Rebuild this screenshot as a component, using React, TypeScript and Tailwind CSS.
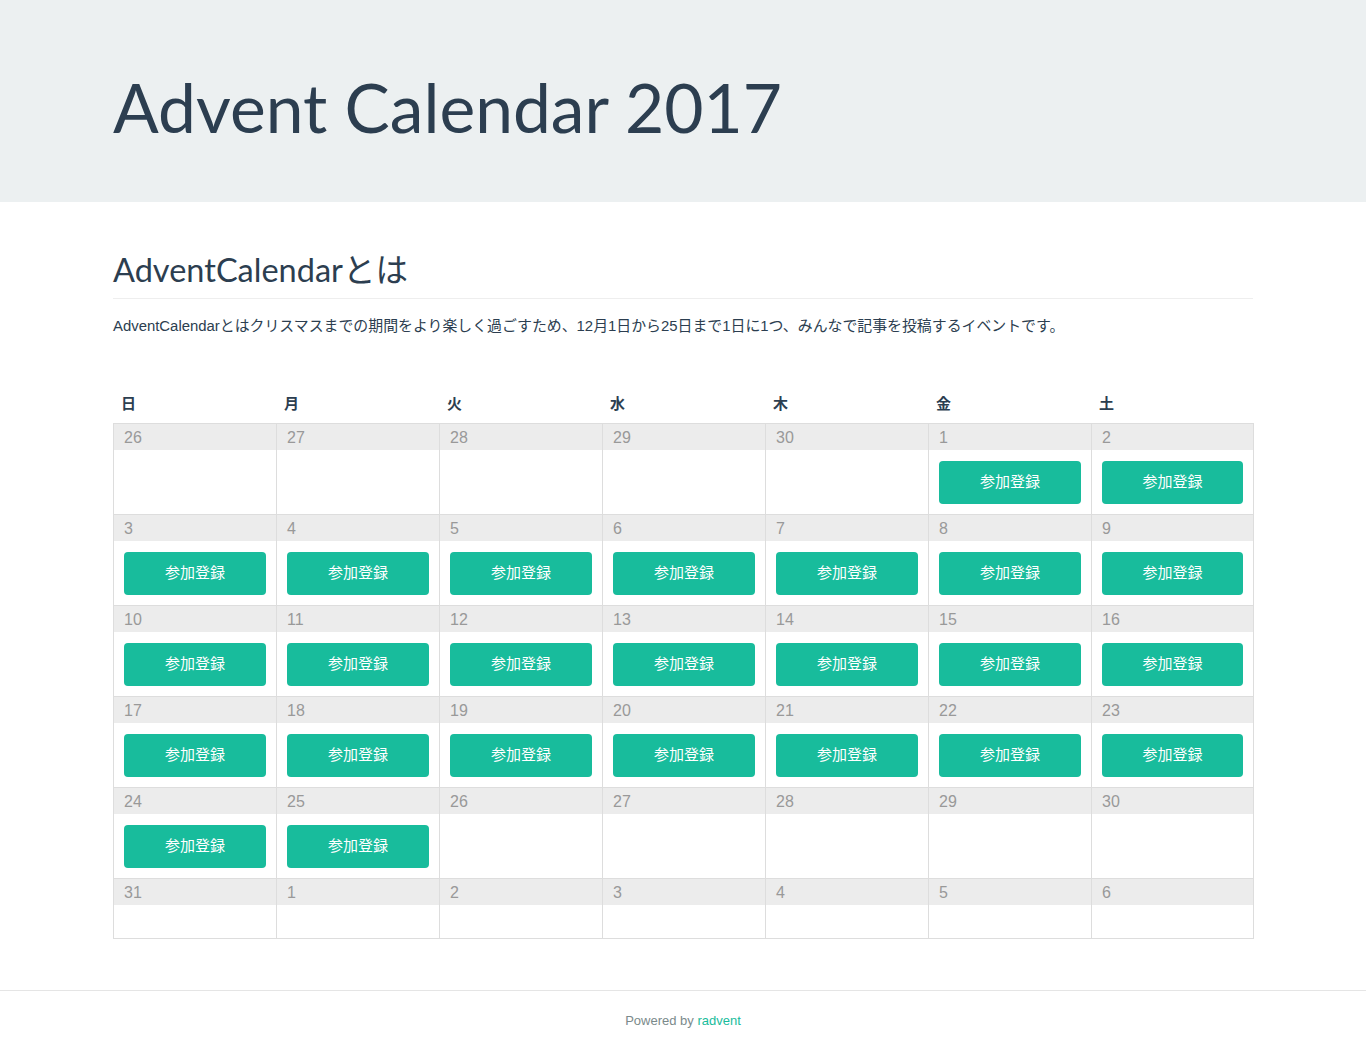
import React from "react";

const jp = "font-['Liberation_Sans','Noto_Sans_CJK_JP',sans-serif]";

type Cell = { day: number; join: boolean };

const rows: Cell[][] = [
  [26, 27, 28, 29, 30].map((d) => ({ day: d, join: false })).concat([
    { day: 1, join: true },
    { day: 2, join: true },
  ]),
  [3, 4, 5, 6, 7, 8, 9].map((d) => ({ day: d, join: true })),
  [10, 11, 12, 13, 14, 15, 16].map((d) => ({ day: d, join: true })),
  [17, 18, 19, 20, 21, 22, 23].map((d) => ({ day: d, join: true })),
  [24, 25].map((d) => ({ day: d, join: true })).concat(
    [26, 27, 28, 29, 30].map((d) => ({ day: d, join: false }))
  ),
  [31, 1, 2, 3, 4, 5, 6].map((d) => ({ day: d, join: false })),
];

const weekdays = ["日", "月", "火", "水", "木", "金", "土"];

function DayCell({ cell, last }: { cell: Cell; last: boolean }) {
  return (
    <div className="border-l border-[#dddddd] last:border-r">
      <div className="h-[26px] bg-[#ececec] px-[10px] pt-[5px] text-[16px] leading-[18px] text-[#999999]">
        {cell.day}
      </div>
      <div className={last ? "h-[33px]" : "h-[64px] px-[10px] pt-[11px]"}>
        {cell.join && !last && (
          <button className="flex h-[43px] w-full items-center justify-center rounded-[4px] bg-[#18bc9c] text-[15px] text-white">
            参加登録
          </button>
        )}
      </div>
    </div>
  );
}

export default function App() {
  return (
    <div className={`min-h-[1060px] bg-white text-[#2c3e50] ${jp}`}>
      <header className="h-[202px] bg-[#ecf0f1]">
        <div className="mx-auto w-[1140px] pt-[63px]">
          <h1 className="font-['Lato',sans-serif] text-[67.7px] leading-[88px]">
            Advent Calendar 2017
          </h1>
        </div>
      </header>

      <main className="mx-auto w-[1140px]">
        <h2 className="mt-[45px] font-['Lato','Noto_Sans_CJK_JP',sans-serif] text-[32.5px] leading-[46px]">
          AdventCalendarとは
        </h2>
        <hr className="mt-[5px] border-t border-[#eeeeee]" />
        <p className="mt-[17px] text-[14.9px] leading-[20px]">
          AdventCalendarとはクリスマスまでの期間をより楽しく過ごすため、12月1日から25日まで1日に1つ、みんなで記事を投稿するイベントです。
        </p>

        <div className="mt-[58px] grid grid-cols-[repeat(7,163px)] pb-[9px] text-[15px] font-bold leading-[20px]">
          {weekdays.map((w) => (
            <div key={w} className="pl-[8px]">
              {w}
            </div>
          ))}
        </div>
        <div className="w-[1141px] border-b border-[#dddddd]">
          {rows.map((row, i) => (
            <div
              key={i}
              className="grid grid-cols-[repeat(7,163px)] border-t border-[#dddddd]"
            >
              {row.map((c, j) => (
                <DayCell key={j} cell={c} last={i === rows.length - 1} />
              ))}
            </div>
          ))}
        </div>
      </main>

      <footer className="mt-[51px] border-t border-[#e5e5e5] pt-[21px] text-center text-[13px] leading-[18px] text-[#7b8a8b]">
        Powered by <a className="text-[#18bc9c]">radvent</a>
      </footer>
    </div>
  );
}
